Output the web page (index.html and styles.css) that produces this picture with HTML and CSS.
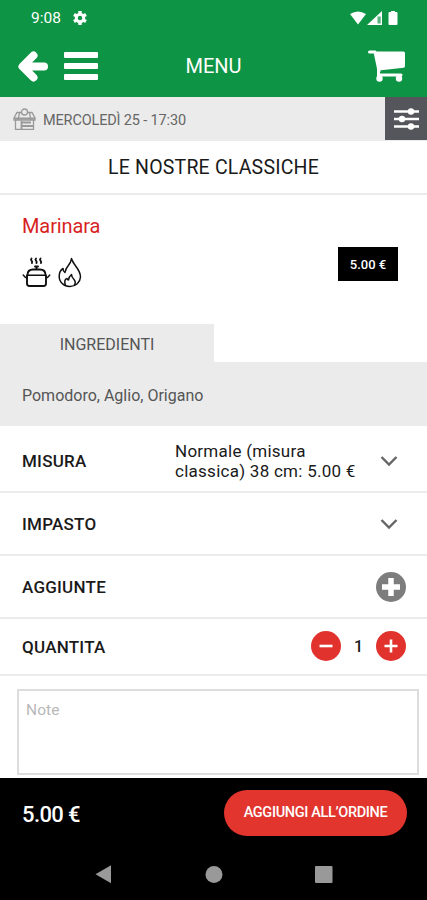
FILE: index.html
```html
<!DOCTYPE html>
<html lang="it">

<head>
    <meta charset="utf-8">
    <meta name="viewport" content="width=device-width, initial-scale=1.0">
    <title>Menu</title>
    <link rel="stylesheet" href="styles.css">
</head>

<body>
    <header>
        <!-- STATUS BAR -->
        <div class="status">
            <span class="clock">9:08</span>
            <svg class="gear" width="14" height="14" viewBox="0 0 14 14">
                <circle cx="7" cy="7" r="3.7" fill="none" stroke="#fff" stroke-width="3" />
                <path d="M7 0v3M7 11v3M1 3.5l2.4 1.4M10.6 9.1l2.4 1.4M1 10.5l2.4-1.4M10.6 4.9L13 3.5" stroke="#fff" stroke-width="3.4" />
            </svg>
            <svg class="signals" width="50" height="16" viewBox="0 0 50 16">
                <path d="M1 4Q9-1 17 4L9 14.500z" fill="#fff" />
                <path d="M33 1v14H18z" fill="#fff" />
                <path d="M28.500 6.500h3.200v7h-3.200z" fill="#0d9444" opacity=".7" />
                <path d="M40.500 2h1.500V1h4v1h1.500q1 0 1 1v11q0 1-1 1h-7q-1 0-1-1V3q0-1 1-1z" fill="#fff" />
            </svg>
        </div>
        <nav>
            <svg class="back" width="30" height="31" viewBox="0 0 30 31">
                <path d="M15.500 4.500L4.500 15.500 15.500 26.500M7 15.500H26" fill="none" stroke="#fff" stroke-width="8" stroke-linecap="round" stroke-linejoin="round" />
                <path d="M4 15.500L14 6v19z" fill="#fff" />
            </svg>
            <div class="burger"><i></i><i></i><i></i></div>
            <h1>MENU</h1>
            <svg class="cart" width="38" height="32" viewBox="0 0 38 32">
                <path d="M1.500 2h5.500l4 19" fill="none" stroke="#fff" stroke-width="3" stroke-linecap="round" stroke-linejoin="round" />
                <path d="M7.500 1.500H35.500q1.500 0 1.500 1.500v13q0 1.500-1.500 1.700L11 20.500z" fill="#fff" />
                <path d="M10.500 19v6H33" fill="none" stroke="#fff" stroke-width="3" stroke-linecap="round" />
                <circle cx="11.500" cy="28.500" r="3.200" fill="#fff" />
                <circle cx="31" cy="28.500" r="3.200" fill="#fff" />
            </svg>
        </nav>
    </header>

    <!-- ORARIO -->
    <div class="orario">
        <svg width="23" height="23" viewBox="0 0 23 23" fill="none" stroke="#999" stroke-width="1.300">
            <path d="M4 4.500h15l3 5.500v2H1v-2zM2.500 12v9.300h18V12M6.500 5L5 12M16.500 5L18 12" />
            <circle cx="11.500" cy="4" r="3" fill="#ebebeb" />
            <path d="M1 10.500h21M8.500 13v8M9 14.500h9M9 18h11" stroke-width="1.800" />
        </svg>
        <span>MERCOLEDÌ 25 - 17:30</span>
        <button class="filtri">
            <svg width="25" height="22" viewBox="0 0 25 22">
                <path d="M0 3.500h25M0 11h25M0 18.500h25" stroke="#fff" stroke-width="2.400" />
                <circle cx="17" cy="3.500" r="3.200" fill="#fff" />
                <circle cx="8" cy="11" r="3.200" fill="#fff" />
                <circle cx="17" cy="18.500" r="3.200" fill="#fff" />
            </svg>
        </button>
    </div>

    <h2><span>LE NOSTRE CLASSICHE</span></h2>

    <!-- PRODOTTO -->
    <section class="prodotto">
        <h3>Marinara</h3>
        <div class="dettagli">
            <svg width="29" height="31" viewBox="0 0 29 31" fill="none" stroke="#111" stroke-width="1.900" stroke-linecap="round">
                <path d="M9.500 1.500q-1 1.200 0 2.200t.5 2.300M14 1.500q-1 1.200 0 2.200t.5 2.300M18.500 1.500q-1 1.200 0 2.200t.5 2.300" />
                <path d="M13 9.500h3M14.500 10v2.500M5.500 18q0-5.500 5.500-5.500h7q5.500 0 5.500 5.500M5 18.500v8q0 2.500 2.500 2.500h14q2.500 0 2.500-2.500v-8" />
                <path d="M5 18.300h19M5 20.500H3.500L1.200 18M24 20.500h1.500l2.300-2.500" stroke-width="1.400" />
            </svg>
            <svg width="24" height="31" viewBox="0 0 24 31" fill="none" stroke="#111" stroke-width="1.500" stroke-linejoin="round">
                <path d="M13.500 1.500C15 8 22.500 12 22.500 20A10.500 10 0 0 1 12 29.500A10.500 10 0 0 1 1.200 19Q1.200 14 5 11.500Q5 14.500 7 15.500Q7.500 12 10 9Q13 5.500 13.500 1.500z" />
                <path d="M7.500 28.500Q5.500 22.500 9 21.500Q9.500 23 10.500 23Q10.500 20 13.500 17.500Q13.500 20 16 22.500Q18.500 25.500 16 28.500" />
            </svg>
            <span class="prezzo">5.00 €</span>
        </div>
    </section>

    <div class="tab"><span>INGREDIENTI</span></div>
    <p class="ingredienti"><span>Pomodoro, Aglio, Origano</span></p>

    <!-- OPZIONI -->
    <section class="opzioni">
        <div class="riga misura">
            <b>MISURA</b>
            <p>Normale (misura<br><span>classica) 38 cm: 5.00 €</span></p>
            <svg class="freccia" width="18" height="12" viewBox="0 0 18 12">
                <path d="M1.500 2L9 9.500 16.500 2" />
            </svg>
        </div>
        <div class="riga impasto">
            <b>IMPASTO</b>
            <svg class="freccia" width="18" height="12" viewBox="0 0 18 12">
                <path d="M1.500 2L9 9.500 16.500 2" />
            </svg>
        </div>
        <div class="riga aggiunte">
            <b>AGGIUNTE</b>
            <svg class="tondo" width="30" height="30" viewBox="0 0 30 30">
                <circle cx="15" cy="15" r="15" fill="#7d7d7d" />
                <path d="M15 6v18M6 15h18" stroke="#fff" stroke-width="5.500" />
            </svg>
        </div>
        <div class="riga quantita">
            <b>QUANTITA</b>
            <svg class="tondo" width="30" height="30" viewBox="0 0 30 30">
                <circle cx="15" cy="15" r="15" fill="#e1322d" />
                <path d="M8.500 15h13" stroke="#fff" stroke-width="2.600" />
            </svg>
            <span class="numero">1</span>
            <svg width="30" height="30" viewBox="0 0 30 30">
                <circle cx="15" cy="15" r="15" fill="#e1322d" />
                <path d="M15 8.500v13M8.500 15h13" stroke="#fff" stroke-width="2.600" />
            </svg>
        </div>
    </section>

    <div class="note">Note</div>

    <!-- TOTALE -->
    <footer>
        <div class="totale">
            <strong>5.00 €</strong>
            <button class="aggiungi"><span>AGGIUNGI ALL’ORDINE</span></button>
        </div>
        <div class="sistema">
            <svg width="238" height="20" viewBox="0 0 238 20" fill="#999">
                <path d="M16 1.200v18L.500 10.200z" />
                <circle cx="119" cy="10.500" r="8.500" />
                <rect x="220" y="2" width="17.500" height="17" rx="1" />
            </svg>
        </div>
    </footer>
</body>

</html>
```
FILE: styles.css
```css
* {
    margin: 0;
    padding: 0;
    box-sizing: border-box;
}

body {
    width: 427px;
    height: 900px;
    overflow: hidden;
    display: flex;
    flex-direction: column;
    background: #fff;
    color: #1a1a1a;
    font-family: Roboto, "Liberation Sans", sans-serif;
}

svg {
    display: block;
    flex: none;
}

button {
    border: none;
    font-family: inherit;
}

/* HEADER */
header {
    height: 97px;
    background: #0d9444;
    color: #fff;
}

.status {
    display: flex;
    align-items: center;
    height: 35px;
    padding: 0 28px 0 31px;
}

.clock {
    width: 42px;
    font-size: 15.5px;
}

.signals {
    margin-left: auto;
}

nav {
    position: relative;
    display: flex;
    align-items: center;
    height: 62px;
    padding: 0 21px 0 18px;
}

.burger {
    margin-left: 16px;
}

.burger i {
    display: block;
    width: 34px;
    height: 6px;
    margin: 5px 0;
    border-radius: 1px;
    background: #fff;
}

h1 {
    position: absolute;
    left: 0;
    right: 0;
    text-align: center;
    font-size: 20px;
    font-weight: 400;
}

.cart {
    margin-left: auto;
}

/* ORARIO */
.orario {
    display: flex;
    align-items: center;
    height: 44px;
    padding-left: 13px;
    background: #ebebeb;
    color: #666;
    font-size: 14.5px;
    letter-spacing: -0.15px;
}

.orario span {
    margin-left: 7px;
    padding-top: 2px;
}

.filtri {
    display: flex;
    align-items: center;
    justify-content: center;
    width: 42px;
    height: 43px;
    margin-left: auto;
    align-self: flex-start;
    background: #55555c;
}

h2 {
    height: 54px;
    border-bottom: 2px solid #ebebeb;
    text-align: center;
    line-height: 53px;
    font-size: 19.5px;
    font-weight: 400;
    letter-spacing: 0.2px;
}

/* PRODOTTO */
.prodotto {
    height: 129px;
    padding: 18px 29px 0 22px;
}

h3 {
    height: 26px;
    line-height: 26px;
    color: #d81f1f;
    font-size: 20px;
    font-weight: 400;
    letter-spacing: -0.1px;
}

.dettagli {
    display: flex;
    align-items: flex-start;
    gap: 7px;
    margin-top: 8px;
}

.dettagli svg {
    margin-top: 10px;
}

.prezzo {
    width: 60px;
    height: 34px;
    margin-left: auto;
    background: #000;
    color: #fff;
    text-align: center;
    line-height: 35px;
    font-size: 13px;
    font-weight: 500;
}

.tab {
    width: 214px;
    height: 38px;
    background: #ebebeb;
    color: #555;
    text-align: center;
    line-height: 41px;
    font-size: 16px;
}

.ingredienti {
    height: 64px;
    padding-left: 22px;
    background: #ebebeb;
    color: #555;
    line-height: 67px;
    font-size: 16px;
}

/* OPZIONI */
.riga {
    display: flex;
    align-items: center;
    padding: 0 21px 0 22px;
    border-bottom: 2px solid #ebebeb;
}

.riga b {
    font-size: 17px;
    font-weight: 500;
    letter-spacing: 0.25px;
}

.misura {
    height: 67px;
}

.misura b {
    width: 153px;
    padding-top: 4px;
}

.misura p {
    padding-top: 4px;
    line-height: 20px;
    font-size: 17px;
    letter-spacing: 0.26px;
}

.misura .freccia {
    margin-top: 4px;
}

.impasto {
    height: 63px;
}

.aggiunte {
    height: 63px;
}

.quantita {
    height: 57px;
}

.freccia {
    margin-left: auto;
    margin-right: 8px;
    fill: none;
    stroke: #666;
    stroke-width: 2.4;
}

.tondo {
    margin-left: auto;
}

.quantita svg {
    margin-bottom: 2px;
}

.numero {
    width: 35px;
    text-align: center;
    font-size: 16px;
    font-weight: 500;
}

.note {
    width: 402px;
    height: 86px;
    margin: 13px 0 3px 17px;
    padding: 10px 7px;
    border: 2px solid #ddd;
    color: #b8b8b8;
    font-size: 15.5px;
    letter-spacing: 0.1px;
}

/* FOOTER */
footer {
    height: 122px;
    background: #000;
}

.totale {
    display: flex;
    align-items: center;
    justify-content: space-between;
    height: 69px;
    padding: 0 20px 0 22px;
}

.totale strong {
    padding-top: 3px;
    color: #fff;
    font-size: 22px;
    font-weight: 500;
    letter-spacing: -0.6px;
}

.aggiungi {
    width: 183px;
    height: 46px;
    border-radius: 23px;
    background: #e1352e;
    color: #fff;
    font-size: 14.5px;
    font-weight: 500;
    letter-spacing: -0.35px;
}

.sistema {
    display: flex;
    justify-content: center;
    padding-top: 17px;
}
```
